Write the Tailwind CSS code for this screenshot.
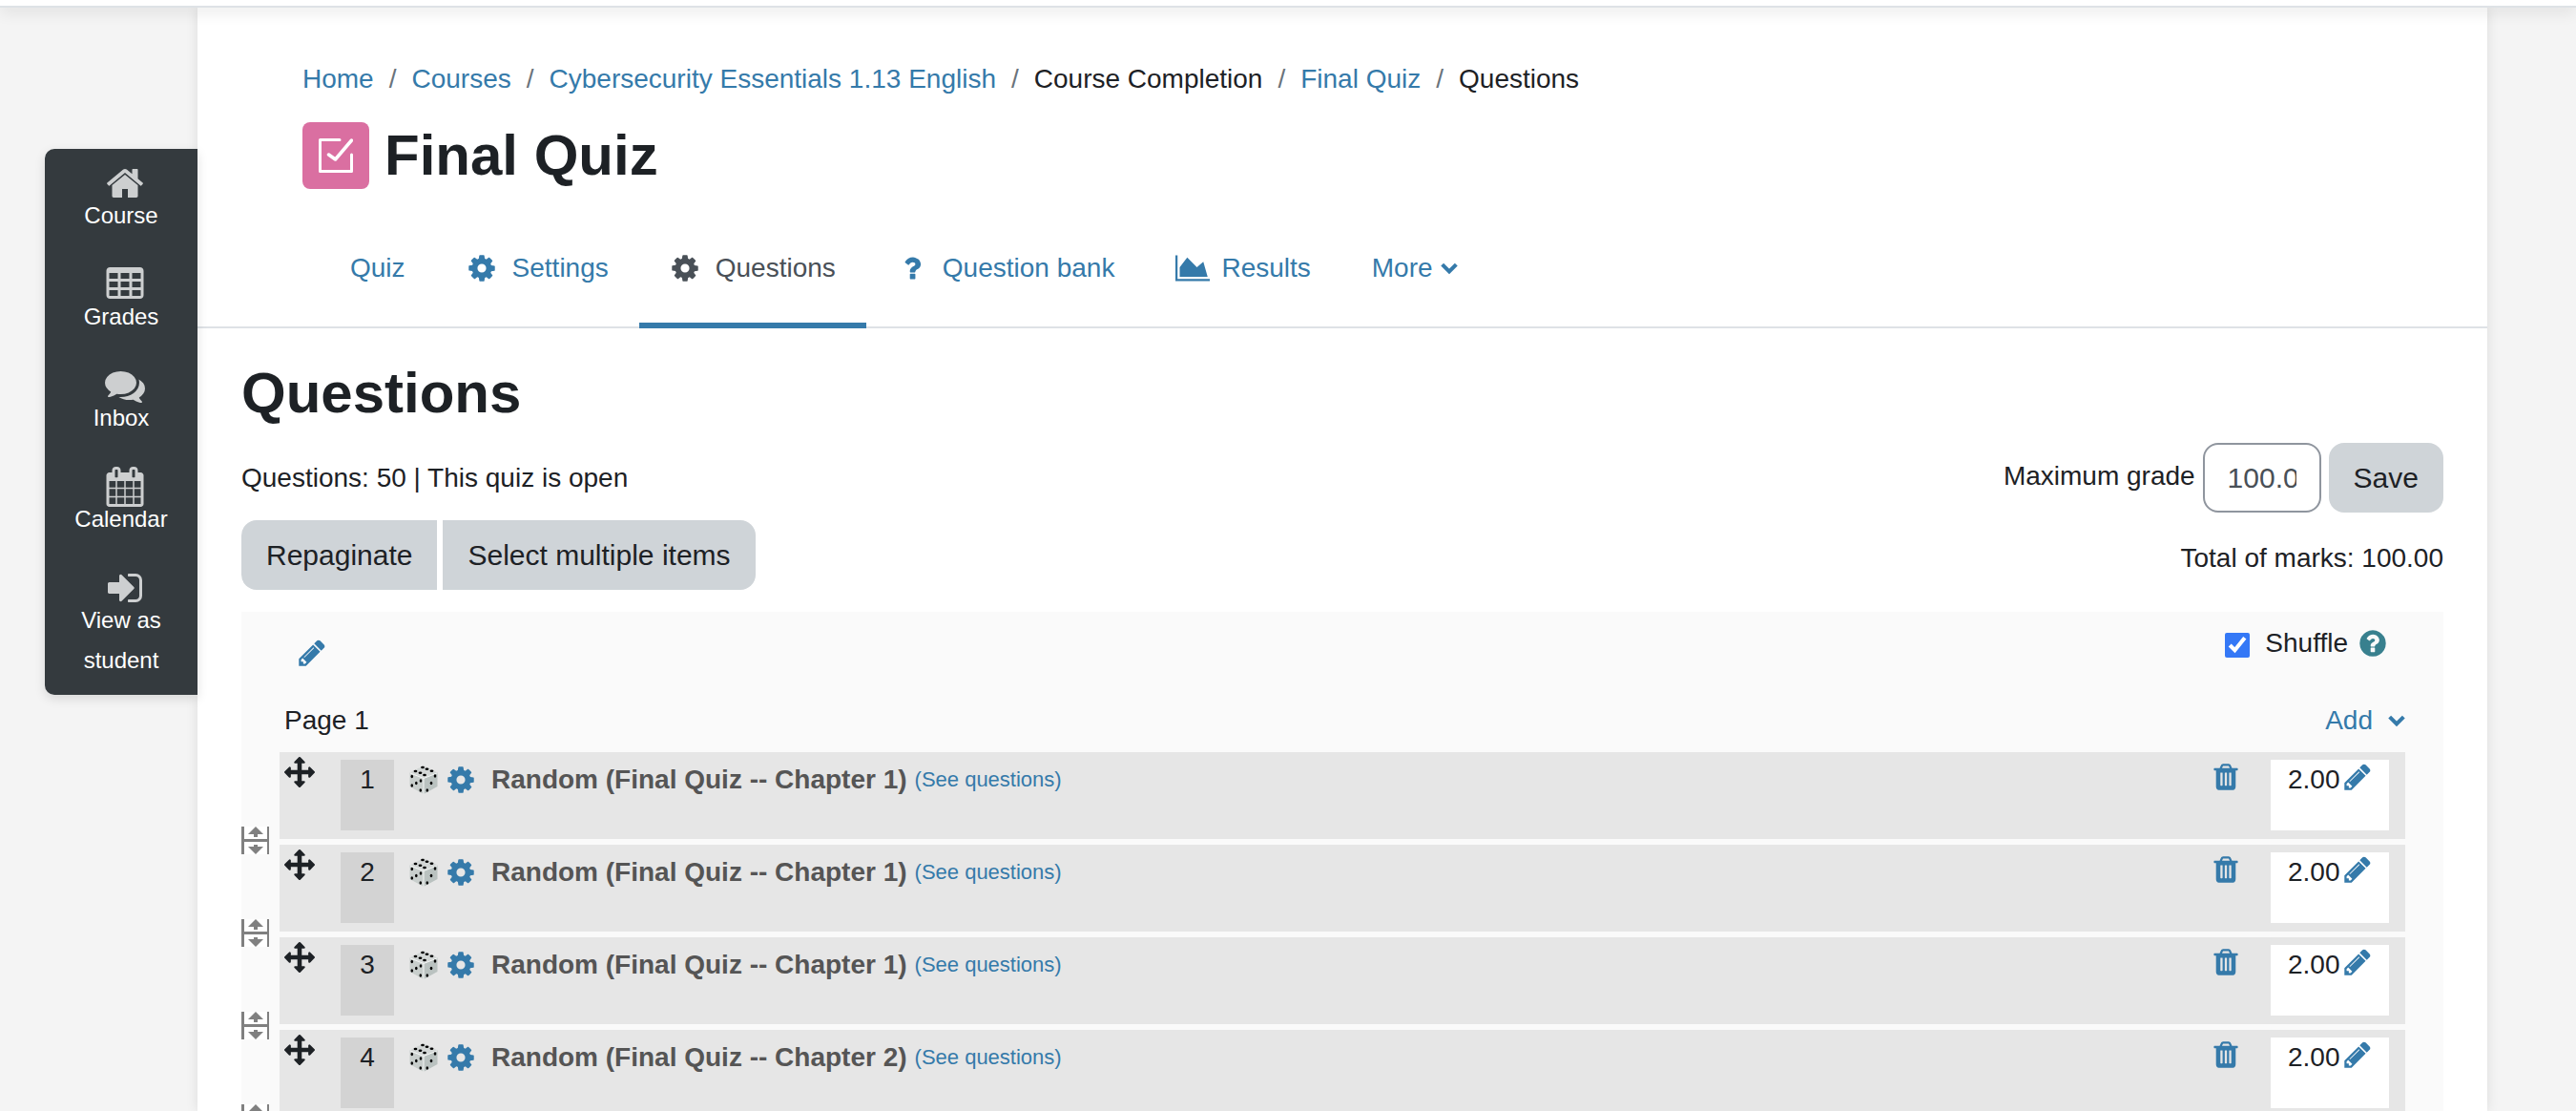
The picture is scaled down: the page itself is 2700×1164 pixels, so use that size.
<!DOCTYPE html>
<html lang="en">
<head>
    <meta charset="UTF-8">
    <meta name="viewport" content="width=device-width, initial-scale=1.0">
    <title>Final Quiz: Questions</title>
    <script src="https://cdn.jsdelivr.net/npm/@tailwindcss/browser@4"></script>
</head>
<body class="bg-[#f4f4f4] text-[#1d2125] text-[28px] leading-[42px] font-['Liberation_Sans',Arial,sans-serif] h-screen overflow-hidden flex flex-col">
    <!-- Icon sprite -->
    <svg class="hidden">
        <symbol id="cog" viewBox="0 0 1792 1792"><path d="M1152 896q0-106-75-181t-181-75-181 75-75 181 75 181 181 75 181-75 75-181zm512-109v222q0 12-8 23t-20 13l-185 28q-19 54-39 91 35 50 107 138 10 12 10 25t-9 23q-27 37-99 108t-94 71q-12 0-26-9l-138-108q-44 23-91 38-16 136-29 186-7 28-36 28h-222q-14 0-24.5-8.5t-11.5-21.5l-28-184q-49-16-90-37l-141 107q-10 9-25 9-14 0-25-11-126-114-165-168-7-10-7-23 0-12 8-23 15-21 51-66.5t54-70.5q-27-50-41-99l-183-27q-13-2-21-12.5t-8-23.5v-222q0-12 8-23t19-13l186-28q14-46 39-92-40-57-107-138-10-12-10-24 0-10 9-23 26-36 98.5-107.5t94.5-71.5q13 0 26 10l138 107q44-23 91-38 16-136 29-186 7-28 36-28h222q14 0 24.5 8.5t11.5 21.5l28 184q49 16 90 37l142-107q9-9 24-9 13 0 25 10 129 119 165 170 7 8 7 22 0 12-8 23-15 21-51 66.5t-54 70.5q26 50 41 98l183 28q13 2 21 12.5t8 23.5z"/></symbol>
        <symbol id="pencil" viewBox="0 0 1792 1792"><path d="M491 1536l91-91-235-235-91 91v107h128v128h107zm523-928q0-22-22-22-10 0-17 7l-542 542q-7 7-7 17 0 22 22 22 10 0 17-7l542-542q7-7 7-17zm-54-192l416 416-832 832h-416v-416zm683 96q0 53-37 90l-166 166-416-416 166-165q36-38 90-38 53 0 91 38l235 234q37 39 37 91z"/></symbol>
        <symbol id="trash" viewBox="0 0 1792 1792"><path d="M704 1376v-704q0-14-9-23t-23-9h-64q-14 0-23 9t-9 23v704q0 14 9 23t23 9h64q14 0 23-9t9-23zm256 0v-704q0-14-9-23t-23-9h-64q-14 0-23 9t-9 23v704q0 14 9 23t23 9h64q14 0 23-9t9-23zm256 0v-704q0-14-9-23t-23-9h-64q-14 0-23 9t-9 23v704q0 14 9 23t23 9h64q14 0 23-9t9-23zm-544-992h448l-48-117q-7-9-17-11h-317q-10 2-17 11zm928 32v64q0 14-9 23t-23 9h-96v948q0 83-47 143.5t-113 60.5h-832q-66 0-113-58.5t-47-141.5v-952h-96q-14 0-23-9t-9-23v-64q0-14 9-23t23-9h309l70-167q15-37 54-63t79-26h320q40 0 79 26t54 63l70 167h309q14 0 23 9t9 23z"/></symbol>
        <symbol id="move" viewBox="0 0 1792 1792"><path d="M1792 896q0 26-19 45l-256 256q-19 19-45 19t-45-19-19-45v-128h-384v384h128q26 0 45 19t19 45-19 45l-256 256q-19 19-45 19t-45-19l-256-256q-19-19-19-45t19-45 45-19h128v-384h-384v128q0 26-19 45t-45 19-45-19l-256-256q-19-19-19-45t19-45l256-256q19-19 45-19t45 19 19 45v128h384v-384h-128q-26 0-45-19t-19-45 19-45l256-256q19-19 45-19t45 19l256 256q19 19 19 45t-19 45-45 19h-128v384h384v-128q0-26 19-45t45-19 45 19l256 256q19 19 19 45z"/></symbol>
        <symbol id="question" viewBox="0 0 1792 1792"><path d="M1088 1256v240q0 16-12 28t-28 12h-240q-16 0-28-12t-12-28v-240q0-16 12-28t28-12h240q16 0 28 12t12 28zm316-600q0 54-15.5 101t-35 76.5-55 59.5-57.5 43.5-61 35.5q-41 23-68.5 65t-27.5 67q0 17-12 32.5t-28 15.5h-240q-15 0-25.5-18.5t-10.5-37.5v-45q0-83 65-156.5t143-108.5q59-27 84-56t25-76q0-42-46.5-74t-107.5-32q-65 0-108 29-35 25-107 115-13 16-31 16-12 0-25-8l-164-125q-13-10-15.5-25t5.5-28q160-266 464-266 80 0 161 31t146 83 106 127.5 41 158.5z"/></symbol>
        <symbol id="help" viewBox="0 0 1792 1792"><path d="M1024 1376v-192q0-14-9-23t-23-9h-192q-14 0-23 9t-9 23v192q0 14 9 23t23 9h192q14 0 23-9t9-23zm256-672q0-88-55.5-163t-138.5-116-170-41q-243 0-371 213-15 24 8 42l132 100q7 6 19 6 16 0 25-12 53-68 86-92 34-24 86-24 48 0 85.5 26t37.5 59q0 38-20 61t-68 45q-63 28-115.5 86.5t-52.5 125.5v36q0 14 9 23t23 9h192q14 0 23-9t9-23q0-19 21.5-49.5t54.5-49.5q32-18 49-28.5t46-35 44.5-48 28-60.5 12.5-81zm384 192q0 209-103 385.5t-279.5 279.5-385.5 103-385.5-103-279.5-279.5-103-385.5 103-385.5 279.5-279.5 385.5-103 385.5 103 279.5 279.5 103 385.5z"/></symbol>
        <symbol id="chart" viewBox="0 0 2048 1792"><path d="M2048 1536v128h-2048v-1536h128v1408h1920zm-384-1024l256 896h-1664v-576l448-576 576 576z"/></symbol>
        <symbol id="home" viewBox="0 0 1792 1792"><path d="M1472 992v480q0 26-19 45t-45 19h-384v-384h-256v384h-384q-26 0-45-19t-19-45v-480q0-1 .5-3t.5-3l575-474 575 474q1 2 1 6zm223-69l-62 74q-8 9-21 11h-3q-13 0-21-7l-692-577-692 577q-12 8-24 7-13-2-21-11l-62-74q-8-10-7-23.5t11-21.5l719-599q32-26 76-26t76 26l244 204v-195q0-14 9-23t23-9h192q14 0 23 9t9 23v408l219 182q10 8 11 21.5t-7 23.5z"/></symbol>
        <symbol id="table" viewBox="0 0 1792 1792"><path fill-rule="evenodd" d="M224 128h1344q66 0 113 47t47 113v1088q0 66-47 113t-113 47h-1344q-66 0-113-47t-47-113v-1088q0-66 47-113t113-47zM192 384v256h384v-256zM704 384v256h384v-256zM1216 384v256h384v-256zM192 768v256h384v-256zM704 768v256h384v-256zM1216 768v256h384v-256zM192 1152v256h384v-256zM704 1152v256h384v-256zM1216 1152v256h384v-256z"/></symbol>
        <symbol id="comments" viewBox="0 0 1792 1792"><path d="M1408 768q0 139-94 257t-256.5 186.5-353.5 68.5q-86 0-176-16-124 88-278 128-36 9-86 16h-3q-11 0-20.5-8t-11.5-21q-1-3-1-6.5t.5-6.5 2-6l2.5-5 3.5-5.5 4-5 4.5-5 4-4.5q5-6 23-25t26-29.5 22.5-29 25-38.5 20.5-44q-124-72-195-177t-71-224q0-139 94-257t256.5-186.5 353.5-68.5 353.5 68.5 256.5 186.5 94 257zm384 256q0 120-71 224.5t-195 176.5q10 24 20.5 44t25 38.5 22.5 29 26 29.5 23 25q1 1 4 4.5t4.5 5 4 5 3.5 5.5l2.5 5 2 6 .5 6.5-1 6.5q-3 14-13 22t-22 7q-50-7-86-16-154-40-278-128-90 16-176 16-271 0-472-132 58 4 88 4 161 0 309-45t264-129q125-92 192-212t67-254q0-77-23-152 129 71 204 178t75 230z"/></symbol>
        <symbol id="calendar" viewBox="0 0 1792 1792"><path d="M192 1664h288v-288h-288v288zm352 0h320v-288h-320v288zm-352-352h288v-320h-288v320zm352 0h320v-320h-320v320zm-352-384h288v-288h-288v288zm736 736h320v-288h-320v288zm-384-736h320v-288h-320v288zm768 736h288v-288h-288v288zm-384-352h320v-320h-320v320zm-352-864v-288q0-13-9.500-22.500t-22.500-9.500h-64q-13 0-22.500 9.500t-9.500 22.500v288q0 13 9.500 22.500t22.500 9.500h64q13 0 22.500-9.500t9.500-22.500zm736 864h288v-320h-288v320zm-384-384h320v-288h-320v288zm384 0h288v-288h-288v288zm32-480v-288q0-13-9.500-22.500t-22.500-9.500h-64q-13 0-22.500 9.500t-9.500 22.500v288q0 13 9.500 22.500t22.500 9.500h64q13 0 22.500-9.500t9.500-22.500zm384-64v1280q0 52-38 90t-90 38h-1408q-52 0-90-38t-38-90v-1280q0-52 38-90t90-38h128v-96q0-66 47-113t113-47h64q66 0 113 47t47 113v96h384v-96q0-66 47-113t113-47h64q66 0 113 47t47 113v96h128q52 0 90 38t38 90z"/></symbol>
        <symbol id="sign-in" viewBox="0 0 1792 1792"><path d="M1312 896q0 26-19 45l-544 544q-19 19-45 19t-45-19-19-45v-288h-448q-26 0-45-19t-19-45v-384q0-26 19-45t45-19h448v-288q0-26 19-45t45-19 45 19l544 544q19 19 19 45zm352-352v704q0 119-84.500 203.500t-203.500 84.500h-320q-13 0-22.500-9.500t-9.500-22.500q0-4-1-20t-.5-26.500 3-23.500 10-19.500 20.500-6.500h320q66 0 113-47t47-113v-704q0-66-47-113t-113-47h-312l-11.500-1-11.500-3-8-5.500-7-9-2-13.500q0-4-1-20t-.5-26.500 3-23.500 10-19.500 20.500-6.500h320q119 0 203.500 84.500t84.500 203.500z"/></symbol>
        <symbol id="chevron" viewBox="0 0 16 12"><path d="M1.500 2.500L8 9l6.500-6.500" fill="none" stroke="currentColor" stroke-width="3.600"/></symbol>
        <symbol id="dice" viewBox="0 0 30 32">
            <path d="M15 1L29.500 8.500 15 14 .5 8.500z" fill="#d3d7d6"/>
            <path d="M.5 8.500L15 14v17L.5 23z" fill="#c8cecc"/>
            <path d="M15 14l14.500-5.500V23L15 31z" fill="#bac2c0"/>
            <path d="M1 9l14 5.500V31M15 14.500L29 9" fill="none" stroke="#f5f7f6"/>
            <g fill="#000">
                <ellipse cx="14" cy="3" rx="1.900" ry="1.200"/><ellipse cx="18.500" cy="4.800" rx="1.900" ry="1.200"/><ellipse cx="23.500" cy="6.800" rx="1.900" ry="1.200"/>
                <ellipse cx="6.500" cy="7" rx="1.900" ry="1.200"/><ellipse cx="11.500" cy="8.800" rx="1.900" ry="1.200"/><ellipse cx="16" cy="11" rx="1.900" ry="1.200"/>
                <ellipse cx="2.800" cy="12.500" rx="1.300" ry="1.800"/><ellipse cx="12" cy="17" rx="1.300" ry="1.800"/><ellipse cx="7.300" cy="19.500" rx="1.300" ry="1.800"/>
                <ellipse cx="2.800" cy="22" rx="1.300" ry="1.800"/><ellipse cx="11.800" cy="27" rx="1.300" ry="1.800"/>
                <ellipse cx="27" cy="12" rx="1.300" ry="1.800"/><ellipse cx="23" cy="19.500" rx="1.300" ry="1.800"/><ellipse cx="18.800" cy="27" rx="1.300" ry="1.800"/>
            </g>
        </symbol>
        <symbol id="split" viewBox="0 0 29 29">
            <path d="M0 0h29v29H0z" fill="#fff"/>
            <path d="M0 0h3v13h24V0h2v29h-2V16H3v13H0z" fill="#808080"/>
            <path d="M15 0l8 8h-6v3h-4V8H7zM15 29l8-8h-6v-2h-4v2H7z" fill="#808080"/>
        </symbol>
    </svg>

    <header class="relative z-10 h-2 shrink-0 bg-white border-b-2 border-[#dee2e6] shadow-[0_4px_16px_rgba(0,0,0,0.12)]"></header>

    <div class="flex-1 min-h-0 flex items-start pl-[47px] pr-[93px]">
        <nav class="relative w-40 shrink-0 mt-[148px] pt-[15px] pb-[15px] rounded-l-[10px] bg-[#343a3e] text-white text-2xl leading-[42px] text-center shadow-[0_4px_12px_rgba(0,0,0,0.12)]" aria-label="Course menu">
            <ul class="flex flex-col gap-6">
                <li><a href="#" class="flex flex-col items-center"><svg class="w-[42px] h-[42px] ml-2 fill-[#cdcfd0]"><use href="#home"/></svg><span class="w-28 -mt-2 h-12">Course</span></a></li>
                <li><a href="#" class="flex flex-col items-center"><svg class="w-[42px] h-[42px] ml-2 fill-[#cdcfd0]"><use href="#table"/></svg><span class="w-28 -mt-2 h-12">Grades</span></a></li>
                <li><a href="#" class="flex flex-col items-center"><svg class="w-[42px] h-[42px] ml-2 fill-[#cdcfd0]"><use href="#comments"/></svg><span class="w-28 -mt-2 h-12">Inbox</span></a></li>
                <li><a href="#" class="flex flex-col items-center"><svg class="w-[42px] h-[42px] ml-2 fill-[#cdcfd0]"><use href="#calendar"/></svg><span class="w-28 -mt-2 h-12">Calendar</span></a></li>
                <li><a href="#" class="flex flex-col items-center"><svg class="w-[42px] h-[42px] ml-2 fill-[#cdcfd0]"><use href="#sign-in"/></svg><span class="w-28 -mt-2">View as student</span></a></li>
            </ul>
        </nav>

        <main class="flex-1 min-w-0 self-stretch bg-white shadow-[0_0_12px_rgba(0,0,0,0.1)]">
            <div class="pt-[54px] px-[110px]">
                <nav aria-label="Breadcrumb">
                    <ol class="flex gap-4">
                        <li><a href="#" class="text-[#357aaa]">Home</a></li>
                        <li class="text-[#6a737b]">/</li>
                        <li><a href="#" class="text-[#357aaa]">Courses</a></li>
                        <li class="text-[#6a737b]">/</li>
                        <li><a href="#" class="text-[#357aaa]">Cybersecurity Essentials 1.13 English</a></li>
                        <li class="text-[#6a737b]">/</li>
                        <li>Course Completion</li>
                        <li class="text-[#6a737b]">/</li>
                        <li><a href="#" class="text-[#357aaa]">Final Quiz</a></li>
                        <li class="text-[#6a737b]">/</li>
                        <li>Questions</li>
                    </ol>
                </nav>
                <div class="flex items-center gap-4 mt-6">
                    <div class="size-[70px] rounded-lg bg-[#da6fa1] flex items-center justify-center">
                        <svg viewBox="0 0 36 36" class="size-9 fill-none stroke-white stroke-[3] [stroke-linecap:round] [stroke-linejoin:round]"><path d="M22 1.500H1.500v33h33V17"/><path d="M10.500 17l7 5L34.500 2" stroke-width="3.500"/></svg>
                    </div>
                    <h1 class="text-[60px] leading-[70px] font-bold">Final Quiz</h1>
                </div>
            </div>

            <nav class="mt-[22px] px-32 border-b-2 border-[#dee2e6]" aria-label="Quiz">
                <ul class="flex -mb-0.5 text-[#357aaa]">
                    <li><a href="#" class="h-[124px] px-8 pt-1 border-b-[6px] border-transparent flex items-center gap-4">Quiz</a></li>
                    <li><a href="#" class="h-[124px] px-8 pt-1 border-b-[6px] border-transparent flex items-center gap-4"><svg class="size-8 fill-current"><use href="#cog"/></svg>Settings</a></li>
                    <li><a href="#" class="h-[124px] px-8 pt-1 border-b-[6px] border-[#357aaa] text-[#495057] flex items-center gap-4" aria-current="page"><svg class="size-8 fill-current"><use href="#cog"/></svg>Questions</a></li>
                    <li><a href="#" class="h-[124px] px-8 pt-1 border-b-[6px] border-transparent flex items-center gap-4"><svg class="size-8 fill-current"><use href="#question"/></svg>Question bank</a></li>
                    <li><a href="#" class="h-[124px] px-8 pt-1 border-b-[6px] border-transparent flex items-center gap-3"><svg class="w-9 h-8 fill-current"><use href="#chart"/></svg>Results</a></li>
                    <li><button type="button" class="h-[124px] px-8 pt-1 border-b-[6px] border-transparent flex items-center gap-2">More<svg class="w-[18px] h-3.5"><use href="#chevron"/></svg></button></li>
                </ul>
            </nav>

            <div class="px-[46px]">
                <h2 class="mt-8 text-[60px] leading-[72px] font-bold">Questions</h2>
                <form class="mt-4 flex items-center justify-between">
                    <p>Questions: 50 | This quiz is open</p>
                    <div class="flex items-center gap-2">
                        <label for="maxgrade" class="pb-1">Maximum grade</label>
                        <input id="maxgrade" type="text" value="100.00" class="w-[124px] h-[73px] px-6 border-2 border-[#8f959e] rounded-2xl bg-white text-[30px] text-[#495057]">
                        <button type="submit" class="h-[73px] px-[26px] rounded-2xl bg-[#cfd4d8] text-[30px]">Save</button>
                    </div>
                </form>
                <div class="mt-2 flex items-center justify-between">
                    <div class="flex gap-1.5 text-[30px]">
                        <button type="button" class="h-[73px] px-[26px] rounded-l-2xl bg-[#cfd4d8]">Repaginate</button>
                        <button type="button" class="h-[73px] px-[26px] rounded-r-2xl bg-[#cfd4d8]">Select multiple items</button>
                    </div>
                    <p class="pt-1.5">Total of marks: 100.00</p>
                </div>

                <section class="mt-[23px] px-10 bg-[#fafafa]">
                    <div class="h-[93px] flex items-start justify-between pl-[18px] pr-[18px]">
                        <button type="button" class="mt-[27px]" aria-label="Edit heading"><svg class="size-8 fill-[#357aaa]"><use href="#pencil"/></svg></button>
                        <div class="mt-3 flex items-center">
                            <input id="shuffle" type="checkbox" checked class="size-[26px] mt-1 accent-[#3478f6]">
                            <label for="shuffle" class="ml-4">Shuffle</label>
                            <button type="button" class="ml-2.5" aria-label="Help with shuffle"><svg class="size-8 fill-[#38808e]"><use href="#help"/></svg></button>
                        </div>
                    </div>
                    <div class="flex justify-between pl-[5px]">
                        <h3>Page 1</h3>
                        <button type="button" class="flex items-center gap-4 text-[#357aaa]">Add<svg class="w-[18px] h-3.5"><use href="#chevron"/></svg></button>
                    </div>
                    <ul id="slots" class="mt-3 flex flex-col gap-1.5"></ul>
                </section>
            </div>
        </main>
    </div>

    <script>
        const slots = [
            { chapter: 1, mark: '2.00' },
            { chapter: 1, mark: '2.00' },
            { chapter: 1, mark: '2.00' },
            { chapter: 2, mark: '2.00' },
        ];

        document.getElementById('slots').innerHTML = slots.map((slot, i) => `
            <li class="relative flex items-start h-[91px] bg-[#e6e6e6] pl-[5px] pr-[17px] pt-2">
                <button type="button" class="-mt-[3px]" aria-label="Move question ${i + 1}"><svg class="size-8 fill-[#1d2125]"><use href="#move"/></svg></button>
                <span class="ml-[27px] w-14 h-[74px] bg-[#d3d3d3] text-center">${i + 1}</span>
                <div class="ml-4 flex-1 flex items-center h-[42px]">
                    <svg class="w-[30px] h-8"><use href="#dice"/></svg>
                    <a href="#" class="ml-2 flex items-center gap-4 font-bold text-[#555555]"><svg class="size-8 fill-[#357aaa]"><use href="#cog"/></svg>Random (Final Quiz -- Chapter ${slot.chapter})</a>
                    <a href="#" class="ml-2 text-[22px] text-[#357aaa]">(See questions)</a>
                </div>
                <button type="button" class="mt-0.5 mr-[31px]" aria-label="Delete question ${i + 1}"><svg class="size-8 fill-[#357aaa]"><use href="#trash"/></svg></button>
                <div class="w-[124px] h-[74px] pl-[18px] bg-white flex items-start">
                    <span>${slot.mark}</span>
                    <button type="button" class="mt-0.5 ml-0.5" aria-label="Edit mark"><svg class="size-8 fill-[#357aaa]"><use href="#pencil"/></svg></button>
                </div>
                <button type="button" class="absolute -left-10 top-[78px]" aria-label="Add page break"><svg class="size-[29px]"><use href="#split"/></svg></button>
            </li>`).join('');
    </script>
</body>
</html>
